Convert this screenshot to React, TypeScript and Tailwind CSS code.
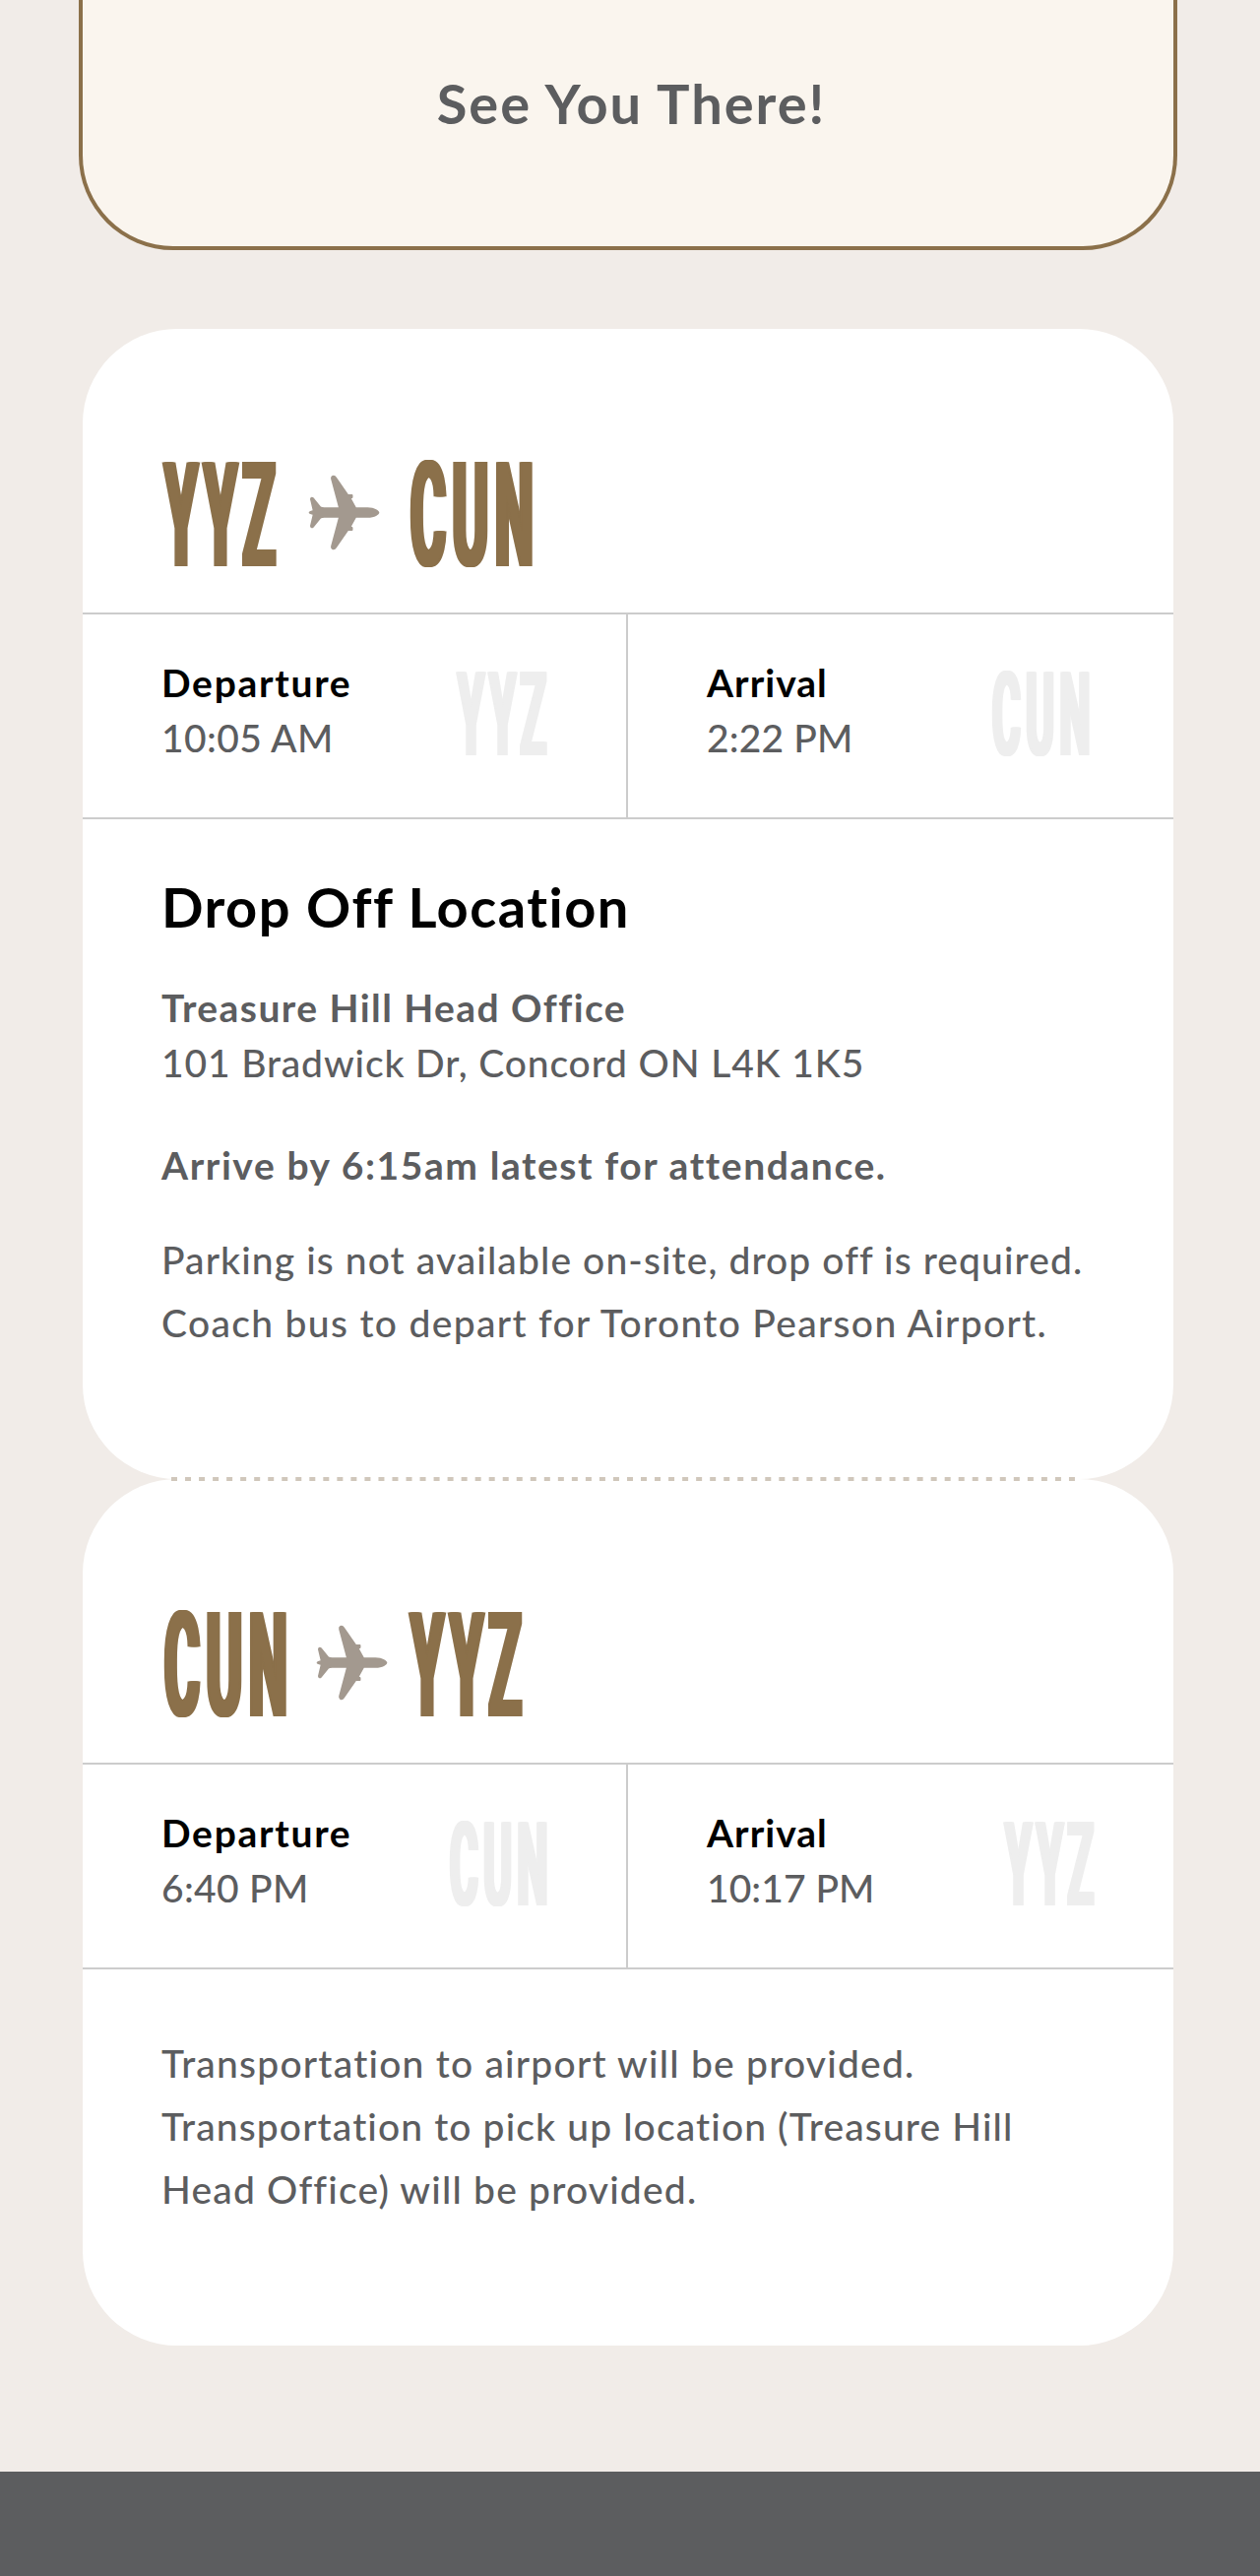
import clsx from "clsx";
import type { ReactNode } from "react";

type Code = "YYZ" | "CUN";

type Stop = { label: string; time: string; code: Code; labelClass: string; timeClass: string; codeClass: string };

// condensed airport code: squeezed Roboto, thickened sideways only
function AirportCode({ code, className }: { code: Code; className?: string }) {
  return (
    <div className={clsx("shrink-0", className)}>
      <span
        className={clsx(
          "block w-max origin-left scale-x-[0.37] font-[Roboto,sans-serif] leading-none font-bold whitespace-nowrap [text-shadow:0.02em_0,-0.02em_0,0.045em_0,-0.045em_0]",
          code === "CUN" ? "tracking-[0.128em]" : "tracking-[0.103em]",
        )}
      >
        {code}
      </span>
    </div>
  );
}

function Plane() {
  return (
    <svg viewBox="40 34 220 232" className="mt-[31px] h-[77px] w-[73px] shrink-0 fill-[#a3998f]">
      <path d="M258 150 C258 144 244 134 222 134 L187 134 L172 107 Q177 107 177 103 L177 97 Q177 94 174 94 L163 94 L127 42 Q122 34 114 37 Q108 40 110 48 L133 134 L90 134 Q82 134 79 132 L57 105 Q53 101 49 103 Q46 105 46 109 L54 143 Q42 146 42 150 Q42 154 54 157 L46 191 Q46 195 49 197 Q53 199 57 195 L79 168 Q82 166 90 166 L133 166 L110 252 Q108 260 114 263 Q122 266 127 258 L163 206 L174 206 Q177 206 177 203 L177 197 Q177 193 172 193 L187 166 L222 166 C244 166 258 156 258 150 Z" />
    </svg>
  );
}

function StopCell({ stop, className }: { stop: Stop; className?: string }) {
  return (
    <div className={clsx("flex h-[206px] justify-between px-20 pt-[41px]", className)}>
      <div className="leading-[56px]">
        <p className={clsx("font-bold text-black", stop.labelClass)}>{stop.label}</p>
        <p className={stop.timeClass}>{stop.time}</p>
      </div>
      <AirportCode code={stop.code} className={clsx("mt-[3px] text-[118px] text-[#eeeeee]", stop.codeClass)} />
    </div>
  );
}

function FlightCard({
  from,
  to,
  departure,
  arrival,
  children,
}: {
  from: Code;
  to: Code;
  departure: Stop;
  arrival: Stop;
  children: ReactNode;
}) {
  return (
    <section className="rounded-[96px] bg-white">
      <div className="flex h-[288px] items-start pt-[117px] pl-[83px] text-[148px] text-[#8b704a]">
        <div className="flex w-[250px]">
          <AirportCode code={from} className={from === "CUN" ? "w-[154px]" : "w-[146px]"} />
          <Plane />
        </div>
        <AirportCode code={to} className="w-[124px]" />
      </div>
      <div className="flex border-y-2 border-[#cccccc]">
        <StopCell stop={departure} className="w-[552px]" />
        <StopCell stop={arrival} className="flex-1 border-l-2 border-[#cccccc]" />
      </div>
      <div className="px-20 pb-[127px]">{children}</div>
    </section>
  );
}

export default function App() {
  return (
    <div className="h-[2616px] w-[1280px] overflow-hidden bg-[#f1ece8] font-[Lato,sans-serif] text-[39px] font-medium text-[#5c5d5f]">
      <div className="ml-20 h-[254px] w-[1116px] rounded-b-[96px] border-4 border-t-0 border-[#8b704a] bg-[#faf5ee] pt-[71px] pl-[7px] text-center">
        <h2 className="text-[56px] leading-[68px] font-bold tracking-[2px]">See You There!</h2>
      </div>

      <main className="mt-20 ml-[84px] w-[1108px]">
        <FlightCard
          from="YYZ"
          to="CUN"
          departure={{
            label: "Departure",
            time: "10:05 AM",
            code: "YYZ",
            labelClass: "tracking-[1.7px]",
            timeClass: "tracking-[0.36px]",
            codeClass: "w-[91px]",
          }}
          arrival={{
            label: "Arrival",
            time: "2:22 PM",
            code: "CUN",
            labelClass: "tracking-[1.02px]",
            timeClass: "tracking-[0.15px]",
            codeClass: "w-[104px]",
          }}
        >
          <h3 className="pt-[55px] text-[56px] leading-[68px] font-bold tracking-[1.46px] text-black">
            Drop Off Location
          </h3>
          <div className="mt-10 leading-[56px] whitespace-nowrap">
            <p className="font-bold tracking-[1.44px]">Treasure Hill Head Office</p>
            <p className="tracking-[0.86px]">101 Bradwick Dr, Concord ON L4K 1K5</p>
          </div>
          <p className="mt-12 leading-[56px] font-bold tracking-[1.58px] whitespace-nowrap">
            Arrive by 6:15am latest for attendance.
          </p>
          <div className="mt-9 leading-[64px] whitespace-nowrap">
            <p className="tracking-[1.1px]">Parking is not available on-site, drop off is required.</p>
            <p className="tracking-[1.33px]">Coach bus to depart for Toronto Pearson Airport.</p>
          </div>
        </FlightCard>

        <div className="relative">
          {/* perforation between the two tickets */}
          <svg className="absolute -top-[2px] left-[90px] h-1 w-[918px]" viewBox="0 0 918 4">
            <line x1="0" y1="2" x2="918" y2="2" stroke="#d0c7bb" strokeWidth="4" strokeDasharray="6 8.03" />
          </svg>
          <FlightCard
            from="CUN"
            to="YYZ"
            departure={{
              label: "Departure",
              time: "6:40 PM",
              code: "CUN",
              labelClass: "tracking-[1.7px]",
              timeClass: "tracking-[0.3px]",
              codeClass: "w-[99px]",
            }}
            arrival={{
              label: "Arrival",
              time: "10:17 PM",
              code: "YYZ",
              labelClass: "tracking-[1.02px]",
              timeClass: "tracking-[0.05px]",
              codeClass: "w-[91px]",
            }}
          >
            <div className="pt-[63px] leading-[64px] whitespace-nowrap">
              <p className="tracking-[1.22px]">Transportation to airport will be provided.</p>
              <p className="tracking-[1.12px]">Transportation to pick up location (Treasure Hill</p>
              <p className="tracking-[1.19px]">Head Office) will be provided.</p>
            </div>
          </FlightCard>
        </div>
      </main>

      <footer className="mt-32 h-[106px] bg-[#5c5d5f]" />
    </div>
  );
}
